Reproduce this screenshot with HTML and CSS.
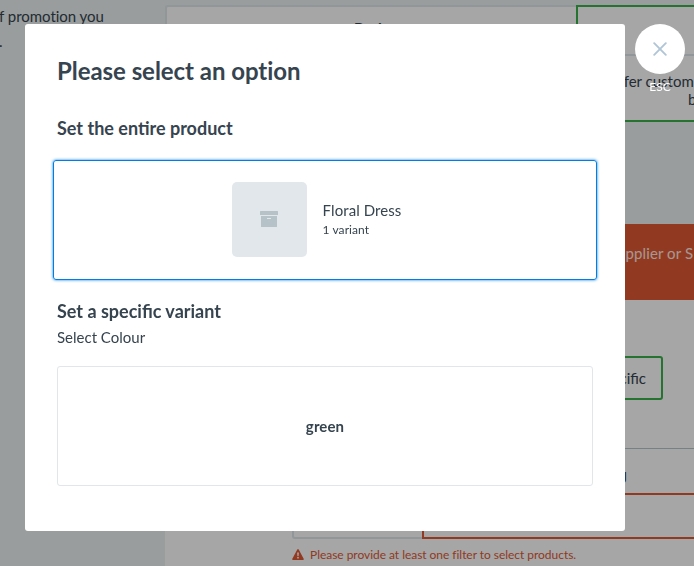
FILE: index.html
```html
<!DOCTYPE html>
<html lang="en">
<head>
<meta charset="utf-8">
<title>Select an option</title>
<link rel="stylesheet" href="styles.css">
</head>
<body>
<div class="page">
  <aside class="help">f promotion you<br>.</aside>
  <main class="content">
    <div class="types">
      <div class="type">Basic</div>
      <div class="type type-active">
        <div class="type-head"></div>
        <div class="type-body"><span>Offer custom</span><span class="type-end">b</span></div>
      </div>
    </div>
    <section class="panel">
      <div class="banner">Supplier or S</div>
      <div class="choices"><div class="choice">Specific</div></div>
      <div class="label">g</div>
      <div class="fields"><div class="addon"></div><div class="field"></div></div>
      <div class="error">
        <svg width="12" height="11" viewBox="0 0 12 11"><path fill="currentColor" fill-rule="evenodd" d="M5.3.5Q6-.4 6.7.5L11.8 10Q12 11 11 11H1Q0 11 .2 10ZM5.1 3.6 5.4 7.2H6.6L6.9 3.6ZM5.2 8V9.5H6.8V8Z"/></svg>
        <span>Please provide at least one filter to select products.</span>
      </div>
    </section>
  </main>
</div>
<div class="overlay">
  <div class="modal">
    <h1>Please select an option</h1>
    <h2>Set the entire product</h2>
    <div class="option option-focused">
      <div class="thumb">
        <svg width="18" height="16" viewBox="0 0 18 16"><path fill="#b5c3c9" fill-rule="evenodd" d="M.5 0H17.5Q18 0 18 .5V4H0V.5Q0 0 .5 0ZM1 5H17V15.5Q17 16 16.5 16H1.5Q1 16 1 15.5ZM7 7V8H11V7Z"/></svg>
      </div>
      <div class="product"><div class="name">Floral Dress</div><div class="count">1 variant</div></div>
    </div>
    <h2>Set a specific variant</h2>
    <p>Select Colour</p>
    <div class="option option-plain">green</div>
  </div>
  <div class="close">
    <div class="circle"><svg width="14" height="14" viewBox="0 0 14 14"><path d="M1.2 1.2 12.8 12.8M12.8 1.2 1.2 12.8" stroke="#b0c5d6" stroke-width="1.9" stroke-linecap="round"/></svg></div>
    <span class="esc">ESC</span>
  </div>
</div>
</body>
</html>
```
FILE: styles.css
```css
* { box-sizing: border-box; }
body {
  margin: 0;
  height: 566px;
  overflow: hidden;
  font: 15px/20px Lato, sans-serif;
  color: #36444f;
}
.page { display: flex; height: 566px; background: #ebf1f1; }
.help { width: 166px; margin-left: -1px; padding-top: 4px; line-height: 25px; letter-spacing: -.03px; flex: none; white-space: nowrap; }
.content { flex: 1; min-width: 0; padding-top: 5px; }
.types { display: grid; grid-template-columns: 411px 1fr; height: 117px; }
.type { background: #fff; border: 2px solid #dfe6eb; border-right: 0; border-radius: 3px 0 0 3px; padding-top: 11px; text-align: center; font-weight: 700; }
.type-active { border-color: #3bb04a; border-radius: 0; padding: 0; text-align: left; font-weight: 400; }
.type-head { height: 49px; border-bottom: 2px solid #dfe6eb; }
.type-body { display: flex; flex-direction: column; padding: 16px 0 0 29px; line-height: 18px; white-space: nowrap; }
.type-end { padding-left: 81px; }
.panel { margin-top: 102px; height: 342px; background: #fff; overflow: hidden; }
.banner { height: 76px; padding: 19px 0 0 444px; background: #e05833; color: #ffe9e1; letter-spacing: .1px; white-space: nowrap; }
.choices { height: 149px; padding-top: 56px; border-bottom: 1px solid #b5c7c9; }
.choice { width: 498px; height: 44px; padding: 10px 15px; border: 2px solid #3bb04a; border-radius: 3px; text-align: right; }
.label { height: 44px; padding-top: 16px; width: 462px; text-align: right; font-family: "Liberation Sans", sans-serif; font-weight: 700; }
.fields { display: flex; height: 46px; padding-left: 127px; }
.addon { width: 130px; border: 2px solid #dfe6eb; border-right: 0; border-radius: 3px 0 0 3px; }
.field { flex: 1; border: 2px solid #e05833; border-right: 0; }
.error { display: flex; align-items: center; gap: 6px; padding: 6px 0 0 127px; color: #e05833; font-size: 12px; letter-spacing: -.04px; white-space: nowrap; }
.error svg { margin-top: -2px; }

.overlay { position: fixed; inset: 0; display: flex; gap: 10px; align-items: flex-start; padding: 24px 9px 0 25px; background: rgba(0, 0, 0, .35); }
.modal { width: 600px; height: 507px; flex: none; padding: 32px; border-radius: 3px; background: #fff; }
h1 { margin: 0 0 31px; font-size: 24px; line-height: 30px; font-weight: 700; letter-spacing: -.05px; }
h2 { margin: 0; font-size: 18px; line-height: 22px; font-weight: 700; }
p { margin: 5px 0 19px; }
.option { display: flex; justify-content: center; align-items: center; height: 120px; border: 1px solid #e1e6ea; border-radius: 3px; }
.option-focused { margin: 21px -4px 20px; gap: 16px; padding: 0 17px 2px 0; border-color: #007ee5; box-shadow: 0 0 3px #007ee5; }
.option-plain { font-weight: 700; letter-spacing: .1px; }
.thumb { width: 75px; height: 75px; display: flex; align-items: center; justify-content: center; padding-right: 1px; background: #e1e7eb; border-radius: 5px; }
.product { padding-top: 2px; }
.name { letter-spacing: .08px; }
.count { font-size: 12px; line-height: 20px; letter-spacing: .08px; }
.close { width: 50px; text-align: center; color: #fff; }
.circle { width: 50px; height: 50px; display: flex; align-items: center; justify-content: center; border-radius: 50%; background: #fff; }
.esc { display: block; padding-top: 3px; font-size: 12px; }
```
